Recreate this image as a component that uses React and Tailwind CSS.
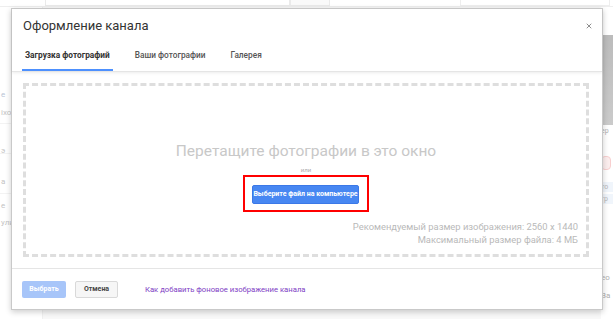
import { X } from 'lucide-react'

const TABS = ['Загрузка фотографий', 'Ваши фотографии', 'Галерея']

function BackgroundPage() {
  // the channel page behind the dialog, mostly hidden
  return (
    <div className="flex h-full flex-col">
      <div className="h-[7px] border-b border-[#e3e3e3] bg-white">
        <div className="ml-[45px] flex h-[6px]">
          <div className="w-[245px] border border-t-0 border-[#dcdcdc] bg-white" />
          <div className="w-[40px] border border-t-0 border-[#dcdcdc] bg-[#f6f6f6]" />
          <div className="ml-[130px] w-[150px] border border-t-0 border-[#e3e3e3]" />
        </div>
      </div>
      <div className="flex flex-1">
        <div className="flex w-[43px] flex-col border-r border-[#e6e6e6] bg-white pt-[82px] text-[8px] leading-[12px] text-[#8a9bb8]">
          <div className="pl-[1px]">е</div>
          <div className="mt-[6px] pl-[1px] text-[#999]">іхос</div>
          <div className="mt-[4px] h-[30px] border-t border-[#ececec] pt-[21px] pl-[1px] text-[#999]">э</div>
          <div className="h-[40px] border-t border-[#ececec] pt-[22px] pl-[1px] text-[#999]">а</div>
          <div className="border-t border-[#ececec] pt-[6px] pl-[1px] text-[#999]">е</div>
          <div className="mt-[5px] pl-[1px] text-[#999]">ули</div>
        </div>
        <div className="flex-1 bg-[#f4f4f4]" />
        <div className="flex w-[12px] flex-col bg-white">
          <div className="mt-[28px] h-[90px] bg-gradient-to-b from-[#8f8f8f] to-[#a8a8a8]" />
          <div className="mt-[2px] text-[7px] leading-[9px] text-[#777]">ep</div>
          <div className="mt-[20px] h-[14px] w-[10px] rounded-sm border border-[#f3b0b0] bg-[#fbe3e3]" />
          <div className="mt-[12px] h-[10px] bg-[#e7eef8] text-[7px] leading-[10px] text-[#888]">то</div>
          <div className="mt-[2px] h-[10px] bg-[#e7eef8] text-[7px] leading-[10px] text-[#888]">гр</div>
          <div className="mt-[68px] text-[8px] leading-[12px] text-[#777]">ео</div>
          <div className="mt-[6px] text-[8px] leading-[12px] text-[#777]">Ва</div>
        </div>
      </div>
    </div>
  )
}

export default function App() {
  return (
    <div className="relative h-[319px] w-[613px] overflow-hidden bg-white font-['Roboto','Liberation_Sans',sans-serif]">
      <BackgroundPage />
      <div className="absolute inset-0 bg-white/40" />

      {/* Dialog */}
      <div className="absolute left-[11px] top-[8px] flex h-[302px] w-[592px] flex-col border border-[#c9c9c9] bg-white shadow-[0_2px_6px_rgba(0,0,0,0.2)]">
        {/* Header */}
        <div className="relative border-b border-[#e5e5e5] shadow-[0_1px_3px_rgba(0,0,0,0.08)]">
          <div className="pl-[11px] pt-[7px] text-[13px] leading-[20px] text-[#333]">Оформление канала</div>
          <button className="absolute right-[9px] top-[13px] text-[#777]">
            <X size={8} strokeWidth={2.5} />
          </button>
          <div className="flex gap-[19px] pl-[10px]">
            {TABS.map((t, i) => (
              <div
                key={t}
                className={`border-b-2 px-[3px] pb-[7px] pt-[12px] text-[8.3px] leading-[14px] ${
                  i === 0 ? 'border-[#4d90fe] font-bold text-[#333]' : 'border-transparent font-medium text-[#555]'
                }`}
              >
                {t}
              </div>
            ))}
          </div>
        </div>

        {/* Drop zone */}
        <div className="pl-[11px] pr-[13px] pt-[11px] pb-[11px]">
          <div className="flex h-[174px] flex-col items-center border-[3px] border-dashed border-[#dedede] pt-[55px]">
            <div className="text-[15.5px] leading-[20px] text-[#c8c8c8]">Перетащите фотографии в это окно</div>
            <div className="mt-[5px] text-[6px] leading-[8px] text-[#aaa]">или</div>
            <div className="mt-[1px] border-2 border-[#ff0000] pb-[6px] pl-[7px] pr-[8px] pt-[2px]">
              <button className="h-[19px] w-[107px] rounded-[2px] border border-[#3b78e7] bg-[#4787f2] text-[7px] font-bold text-white">
                Выберите файл на компьютере
              </button>
            </div>
            <div className="mt-[8px] self-end pr-[8px] text-right text-[9.4px] leading-[13px] text-[#b9b9b9]">
              <div>Рекомендуемый размер изображения: 2560 x 1440</div>
              <div>Максимальный размер файла: 4 МБ</div>
            </div>
          </div>
        </div>

        {/* Footer */}
        <div className="flex items-center border-t border-[#e5e5e5] pl-[10px] pt-[12px]">
          <button className="h-[17px] w-[44px] rounded-[2px] bg-[#a7c5f9] text-[7px] font-bold text-white">Выбрать</button>
          <button className="ml-[9px] h-[17px] w-[43px] rounded-[2px] border border-[#d9d9d9] bg-[#f6f6f6] text-[7px] font-bold text-[#444]">
            Отмена
          </button>
          <a className="ml-[27px] text-[7.7px] leading-[12px] text-[#8040c4]">Как добавить фоновое изображение канала</a>
        </div>
      </div>
    </div>
  )
}
